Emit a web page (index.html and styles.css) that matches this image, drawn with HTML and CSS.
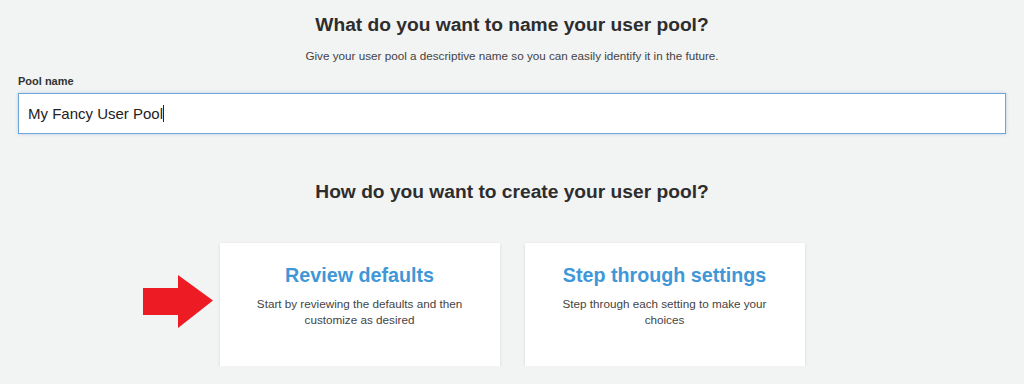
FILE: index.html
```html
<!DOCTYPE html>
<html lang="en">

<head>
    <meta charset="UTF-8">
    <meta name="viewport" content="width=device-width, initial-scale=1.0">
    <title>Create user pool</title>
    <link rel="stylesheet" href="styles.css">
</head>

<body>
    <section id="page">
        <h2 class="heading">What do you want to name your user pool?</h2>
        <p class="intro">Give your user pool a descriptive name so you can easily identify it in the future.</p>

        <div class="field">
            <label class="field-label" for="pool-name">Pool name</label>
            <div class="field-input">My Fancy User Pool<span class="caret"></span></div>
        </div>

        <h2 class="heading heading-create">How do you want to create your user pool?</h2>

        <div class="choices">
            <div class="choice">
                <!-- annotation arrow pointing at the first card -->
                <svg class="pointer" width="71" height="54" viewBox="0 0 71 54">
                    <polygon points="0,13 35,13 35,0 70,25.5 35,53 35,40 0,40" fill="#ed1c24" />
                </svg>
                <div class="choice-title">Review defaults</div>
                <div class="choice-text">Start by reviewing the defaults and then customize as desired</div>
            </div>
            <div class="choice">
                <div class="choice-title">Step through settings</div>
                <div class="choice-text">Step through each setting to make your choices</div>
            </div>
        </div>
    </section>
</body>

</html>
```

FILE: styles.css
```css
body {
    margin: 0;
    background-color: #f2f3f3;
    font-family: "Liberation Sans", Arial, sans-serif;
    color: #333;
}

#page {
    padding: 0 18px 0 18px;
}

.heading {
    margin: 0;
    padding-top: 14px;
    font-size: 19.2px;
    font-weight: bold;
    line-height: 22px;
    text-align: center;
    color: #2d2d2d;
}

.intro {
    margin: 13px 0 0 0;
    font-size: 11.7px;
    line-height: 14px;
    text-align: center;
    color: #444;
}

.field {
    margin-top: 11px;
}

.field-label {
    display: block;
    font-size: 11px;
    font-weight: bold;
    line-height: 14px;
    color: #333;
}

.field-input {
    margin-top: 5px;
    height: 41px;
    box-sizing: border-box;
    padding: 0 9px;
    display: flex;
    align-items: center;
    background-color: #fff;
    border: 1px solid #6ea6d9;
    box-shadow: 0 0 3px rgba(110, 166, 217, 0.45);
    font-size: 15px;
    color: #222;
}

.caret {
    display: inline-block;
    width: 1px;
    height: 17px;
    background-color: #222;
}

.heading-create {
    padding-top: 47px;
}

/* The two cards */
.choices {
    display: flex;
    justify-content: center;
    gap: 25px;
    margin-top: 40px;
}

.choice {
    position: relative;
    width: 280px;
    height: 123px;
    box-sizing: border-box;
    padding: 21px 28px 0 28px;
    background-color: #fff;
    box-shadow: 0 1px 3px rgba(0, 0, 0, 0.12);
    text-align: center;
}

.choice-title {
    font-size: 19.7px;
    font-weight: bold;
    line-height: 22px;
    color: #4097d8;
}

.choice-text {
    margin-top: 10px;
    font-size: 11.7px;
    line-height: 16px;
    color: #444;
}

.pointer {
    position: absolute;
    left: -77px;
    top: 32px;
}
```
